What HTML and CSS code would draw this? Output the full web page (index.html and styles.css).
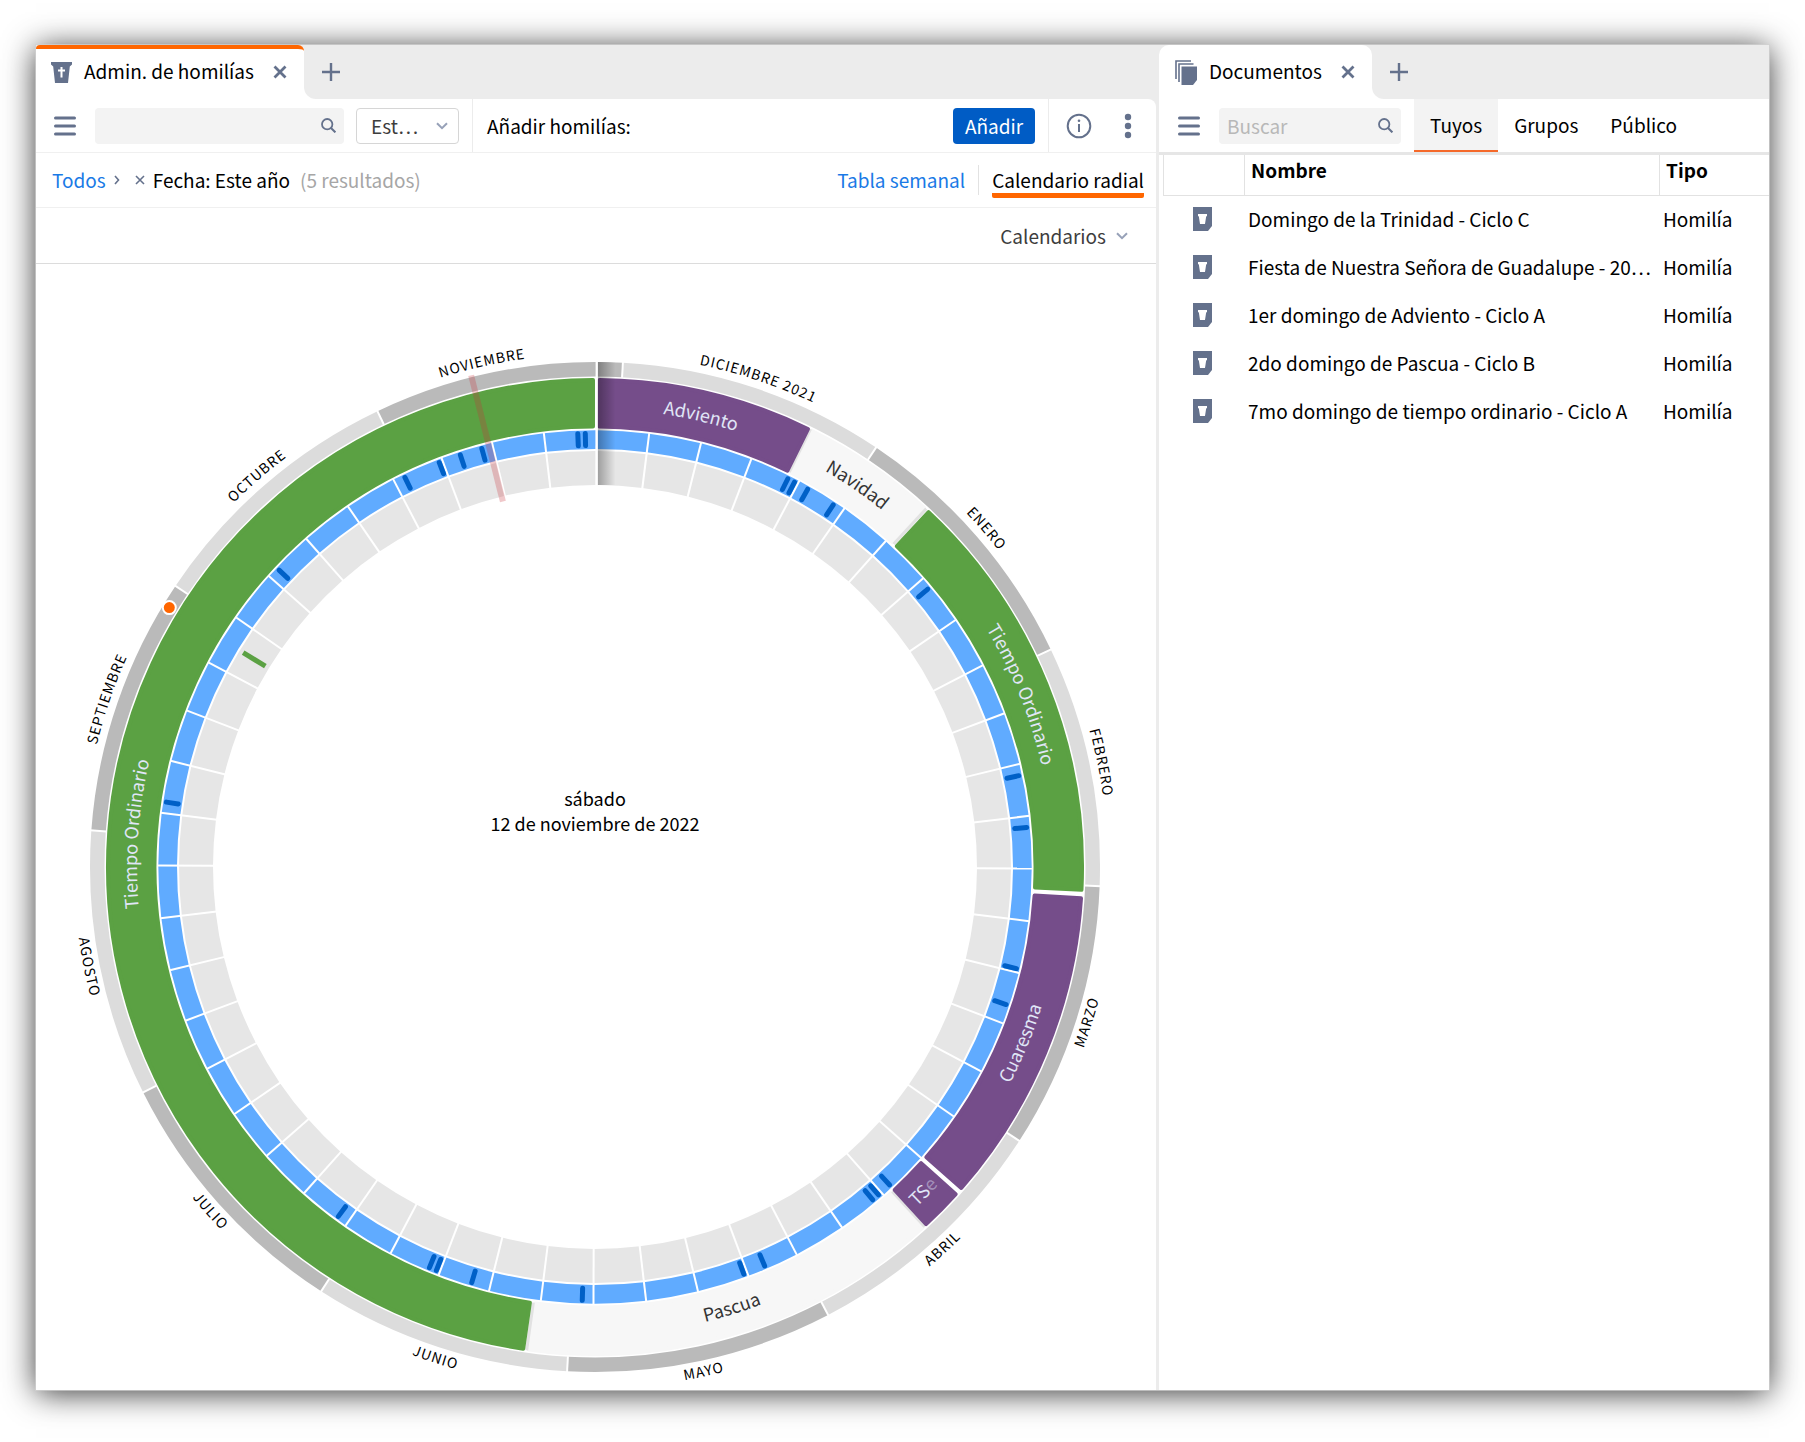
FILE: index.html
```html
<!DOCTYPE html>
<html lang="es">
<head>
<meta charset="utf-8">
<meta name="viewport" content="width=device-width, initial-scale=1">
<title>Admin. de homilías</title>
<link rel="stylesheet" href="styles.css">
</head>
<body>
<svg class="defs" aria-hidden="true">
  <symbol id="i-close" viewBox="0 0 14 14"><path d="M1.500 1.500l11 11M12.500 1.500l-11 11" fill="none" stroke="currentColor" stroke-width="2.800"/></symbol>
  <symbol id="i-plus" viewBox="0 0 18 18"><path d="M9 0v18M0 9h18" fill="none" stroke="currentColor" stroke-width="2.400"/></symbol>
  <symbol id="i-menu" viewBox="0 0 22 20"><path d="M1.500 2h19M1.500 10h19M1.500 18h19" fill="none" stroke="currentColor" stroke-width="3" stroke-linecap="round"/></symbol>
  <symbol id="i-search" viewBox="0 0 15 15"><circle cx="6.200" cy="6.200" r="5.200" fill="none" stroke="currentColor" stroke-width="1.800"/><path d="M10 10l4.400 4.400" stroke="currentColor" stroke-width="2"/></symbol>
  <symbol id="i-chevron" viewBox="0 0 12 8"><path d="M1 1.200l5 5 5-5" fill="none" stroke="currentColor" stroke-width="2"/></symbol>
  <symbol id="i-doc" viewBox="0 0 19 24"><path d="M0 0h19v19l-4 5H0z" fill="currentColor"/><path d="M5 7h9v2.200h-.8L12 17H7L5.800 9.200H5z" fill="#fff"/></symbol>
</svg>
<div class="window">
  <main class="pane pane-main">
    <div class="tabbar">
      <div class="tab tab-active">
        <svg class="ic-ambo" viewBox="0 0 21 21" aria-hidden="true"><path d="M0 0h21v2.500L18.800 4.500 17 21H4L2.200 4.500 0 2.500z" fill="currentColor"/><path d="M10.500 5v10.500M7 8.500h7" stroke="#fff" stroke-width="2"/></svg>
        <span>Admin. de homilías</span>
        <button class="icon-btn tab-close" aria-label="Cerrar pestaña"><svg class="ic-close"><use href="#i-close"/></svg></button>
      </div>
      <div class="tab-rest"><button class="icon-btn" aria-label="Nueva pestaña"><svg class="ic-plus"><use href="#i-plus"/></svg></button></div>
    </div>
    <div class="toolbar">
      <button class="icon-btn menu" aria-label="Menú"><svg class="ic-menu"><use href="#i-menu"/></svg></button>
      <label class="search search-wide"><input type="search" aria-label="Buscar homilías"><svg class="ic-search"><use href="#i-search"/></svg></label>
      <label class="select"><select aria-label="Periodo"><option>Est…</option></select><svg class="ic-chevron"><use href="#i-chevron"/></svg></label>
      <div class="add-zone">
        <span>Añadir homilías:</span>
        <button class="btn-primary">Añadir</button>
      </div>
      <div class="tools">
        <button class="icon-btn" aria-label="Información"><svg class="ic-info" viewBox="0 0 26 26"><circle cx="13" cy="13" r="11.300" fill="none" stroke="currentColor" stroke-width="2"/><path d="M13 11v8" stroke="currentColor" stroke-width="2"/><circle cx="13" cy="7.800" r="1.300" fill="currentColor"/></svg></button>
        <button class="icon-btn" aria-label="Más opciones"><svg class="ic-dots" viewBox="0 0 8 26"><g fill="currentColor"><circle cx="4" cy="4" r="3.200"/><circle cx="4" cy="13" r="3.200"/><circle cx="4" cy="22" r="3.200"/></g></svg></button>
      </div>
    </div>
    <div class="crumbs">
      <a href="#">Todos</a>
      <svg class="ic-next" viewBox="0 0 6 10" aria-hidden="true"><path d="M1 1l3.500 4L1 9" fill="none" stroke="currentColor" stroke-width="1.600"/></svg>
      <button class="icon-btn filter-x" aria-label="Quitar filtro"><svg class="ic-x" viewBox="0 0 10 10"><path d="M1 1l8 8M9 1L1 9" stroke="currentColor" stroke-width="1.600"/></svg></button>
      <span>Fecha: Este año</span>
      <span class="count">(5 resultados)</span>
      <nav class="views">
        <a href="#">Tabla semanal</a>
        <a href="#" class="view-on" aria-current="page">Calendario radial</a>
      </nav>
    </div>
    <div class="options"><button class="drop">Calendarios <svg class="ic-chevron"><use href="#i-chevron"/></svg></button></div>
    <svg class="radial" id="radial" viewBox="0 0 1120 1126" role="img" aria-label="Calendario radial"></svg>
  </main>
  <aside class="pane pane-docs">
    <div class="tabbar">
      <div class="tab">
        <svg class="ic-stack" viewBox="0 0 22 25" aria-hidden="true"><path d="M1 19V1h15" fill="none" stroke="currentColor" stroke-width="1.600"/><path d="M4 22V4h14.500" fill="none" stroke="currentColor" stroke-width="1.600"/><path d="M6.500 6.500H22V20l-4 5H6.500z" fill="currentColor"/></svg>
        <span>Documentos</span>
        <button class="icon-btn tab-close" aria-label="Cerrar pestaña"><svg class="ic-close"><use href="#i-close"/></svg></button>
      </div>
      <div class="tab-rest"><button class="icon-btn" aria-label="Nueva pestaña"><svg class="ic-plus"><use href="#i-plus"/></svg></button></div>
    </div>
    <div class="toolbar toolbar-docs">
      <button class="icon-btn menu" aria-label="Menú"><svg class="ic-menu"><use href="#i-menu"/></svg></button>
      <label class="search"><input type="search" placeholder="Buscar" aria-label="Buscar documentos"><svg class="ic-search"><use href="#i-search"/></svg></label>
      <nav class="scopes">
        <a href="#" class="scope-on" aria-current="page">Tuyos</a>
        <a href="#">Grupos</a>
        <a href="#">Público</a>
      </nav>
    </div>
    <div class="table-wrap">
      <table class="docs">
        <colgroup><col class="c-icon"><col class="c-name"><col></colgroup>
        <thead><tr><th aria-label="Icono"></th><th>Nombre</th><th>Tipo</th></tr></thead>
        <tbody>
          <tr><td><svg class="ic-doc"><use href="#i-doc"/></svg></td><td>Domingo de la Trinidad - Ciclo C</td><td>Homilía</td></tr>
          <tr><td><svg class="ic-doc"><use href="#i-doc"/></svg></td><td>Fiesta de Nuestra Señora de Guadalupe - 20…</td><td>Homilía</td></tr>
          <tr><td><svg class="ic-doc"><use href="#i-doc"/></svg></td><td>1er domingo de Adviento - Ciclo A</td><td>Homilía</td></tr>
          <tr><td><svg class="ic-doc"><use href="#i-doc"/></svg></td><td>2do domingo de Pascua - Ciclo B</td><td>Homilía</td></tr>
          <tr><td><svg class="ic-doc"><use href="#i-doc"/></svg></td><td>7mo domingo de tiempo ordinario - Ciclo A</td><td>Homilía</td></tr>
        </tbody>
      </table>
    </div>
  </aside>
</div>
<script src="chart.js"></script>
</body>
</html>
```
FILE: styles.css
```css
* { box-sizing: border-box; }

body {
  margin: 0;
  padding: 45px 36px 52px;
  background: #fff;
  color: #000;
  font: 19px/24px "Noto Sans CJK SC", "Noto Sans", sans-serif;
}

button, input, select { font: inherit; color: inherit; margin: 0; }
a { color: #1a7ae6; text-decoration: none; }
svg { display: block; flex: none; }

.defs { position: absolute; width: 0; height: 0; }

.window {
  display: grid;
  grid-template-columns: minmax(0, 112fr) minmax(0, 61fr);
  column-gap: 3px;
  background: #ececec;
  box-shadow: 0 0 0 1px rgba(210, 210, 210, .7), 0 3px 30px rgba(0, 0, 0, .8);
}

.pane { background: #fff; min-width: 0; }
.pane-main { background: linear-gradient(#ececec 80px, #fff 80px); }

/* tabs */
.tabbar { display: flex; height: 54px; background: linear-gradient(#ececec 50%, #fff 50%); }
.tab {
  display: flex;
  align-items: center;
  gap: 12px;
  padding: 0 17px 0 16px;
  background: #fff;
  border-radius: 10px 10px 0 0;
}
.tab span { padding-bottom: 2px; }
.tab-active {
  padding-left: 15px;
  border-top: 4px solid #ff6600;
  border-bottom: 4px solid #fff;
  border-radius: 4px 6px 0 0;
}
.tab-close { margin-left: 7px; }
.tab-rest {
  flex: 1;
  display: flex;
  align-items: center;
  padding-left: 18px;
  background: #ececec;
  border-radius: 0 0 0 12px;
}

.icon-btn {
  display: flex;
  align-items: center;
  padding: 0;
  border: 0;
  background: none;
  color: #64718c;
}
.tab > svg { color: #64718c; }
.ic-ambo { width: 21px; height: 21px; }
.ic-stack { width: 22px; height: 25px; }
.ic-close { width: 14px; height: 14px; }
.ic-plus { width: 18px; height: 18px; }
.ic-menu { width: 22px; height: 20px; }
.ic-search { width: 15px; height: 15px; color: #64718c; }
.ic-chevron { width: 12px; height: 8px; color: #97a1b8; }
.ic-info { width: 26px; height: 26px; }
.ic-dots { width: 8px; height: 26px; }
.ic-next { width: 6px; height: 10px; color: #64718c; }
.ic-x { width: 10px; height: 10px; }
.ic-doc { width: 19px; height: 24px; color: #64718c; }

/* toolbars */
.toolbar {
  display: flex;
  align-items: center;
  height: 54px;
  background: #fff;
  border-bottom: 1px solid #f0f0f0;
}
.pane-main .toolbar { border-top-right-radius: 8px; }
.menu { margin: 0 19px 0 18px; }
.search {
  display: flex;
  align-items: center;
  width: 182px;
  height: 36px;
  padding: 0 8px;
  background: #f3f3f3;
  border-radius: 4px;
}
.search-wide { width: 249px; }
.search input {
  flex: 1;
  min-width: 0;
  padding: 0;
  border: 0;
  outline: 0;
  background: none;
}
.search input::placeholder { color: #b8b8b8; opacity: 1; }

.select {
  display: flex;
  align-items: center;
  width: 103px;
  height: 36px;
  margin: 0 13px 0 12px;
  padding: 0 10px 0 14px;
  border: 1px solid #d6d6d6;
  border-radius: 4px;
}
.select select {
  flex: 1;
  min-width: 0;
  padding: 0;
  border: 0;
  outline: 0;
  background: none;
  appearance: none;
  color: #3d3d3d;
}

.add-zone {
  flex: 1;
  display: flex;
  align-items: center;
  justify-content: space-between;
  height: 100%;
  padding: 0 13px 0 14px;
  border: solid #ececec;
  border-width: 0 1px;
}
.btn-primary {
  width: 82px;
  height: 36px;
  padding: 0;
  border: 0;
  border-radius: 4px;
  background: #005cc5;
  color: #fff;
}
.tools { display: flex; align-items: center; gap: 32px; padding: 0 24px 0 17px; }

/* breadcrumbs and views */
.crumbs {
  display: flex;
  align-items: center;
  height: 55px;
  padding: 0 12px 0 16px;
  background: #fff;
  border-bottom: 1px solid #f0f0f0;
}
.ic-next { margin: 0 15px 0 8px; }
.filter-x { margin-right: 8px; }
.count { margin-left: 10px; color: #a6a6a6; }
.views { display: flex; margin-left: auto; }
.views a { height: 36px; padding-top: 6px; }
.views a + a { margin-left: 27px; position: relative; }
.views a + a::before {
  content: "";
  position: absolute;
  left: -14px;
  top: 3px;
  height: 30px;
  border-left: 1px solid #e2e2e2;
}
.views .view-on { color: #000; border-bottom: 5px solid #ff6600; border-radius: 2px; }

.options {
  display: flex;
  justify-content: flex-end;
  align-items: center;
  height: 56px;
  padding-right: 28px;
  background: #fff;
  border-bottom: 1px solid #dcdcdc;
}
.drop {
  display: flex;
  align-items: center;
  gap: 10px;
  padding: 0;
  border: 0;
  background: none;
  color: #3d3d3d;
}

/* documents pane */
.toolbar-docs { height: 56px; border-bottom: 3px solid #e6e6e6; }
.toolbar-docs .menu { margin-left: 19px; }
.scopes { display: flex; align-self: stretch; margin-left: 13px; }
.scopes a { display: flex; align-items: center; padding: 0 16px 2px; color: #000; }
.scopes .scope-on { background: #f3f3f3; box-shadow: inset 0 -2px #f5692a; }

.table-wrap { padding-left: 4px; }
.docs { width: 100%; table-layout: fixed; border-collapse: separate; border-spacing: 0; }
.c-icon { width: 81px; }
.c-name { width: 415px; }
.docs th {
  height: 41px;
  padding: 0 6px 10px;
  text-align: left;
  border-left: 1px solid #e2e2e2;
  border-bottom: 1px solid #e2e2e2;
}
.docs td { height: 48px; padding: 0 4px 3px; white-space: nowrap; }
.docs td:first-child { padding-left: 30px; }

/* radial calendar */
.radial { width: 100%; height: auto; }
.radial text { text-anchor: middle; font-size: 18px; }
.m-dark { fill: #bababa; }
.m-light { fill: #dcdcdc; }
.radial .m-label { font-size: 14px; letter-spacing: 1px; }
.season { stroke-width: 4px; stroke-linejoin: round; }
.s-green { fill: #5ba143; stroke: #5ba143; }
.s-purple { fill: #754d8a; stroke: #754d8a; }
.s-white { fill: #f7f7f7; stroke: #f7f7f7; }
.s-edge { stroke: #e2e2e2; stroke-width: 3px; }
.s-label { fill: #e0e6f7; }
.s-label-dark { fill: #333; }
.s-faded { fill-opacity: .45; }
.w-blue { fill: #60abff; }
.w-grey { fill: #e6e6e6; }
.gap { stroke: #fff; stroke-width: 2px; }
.feast { stroke: #0060c7; stroke-width: 5px; stroke-linecap: round; }
.homily { stroke: #5ba143; stroke-width: 5px; }
.cursor { stroke: rgba(200, 50, 60, .27); stroke-width: 6px; }
.today { fill: #ff6600; stroke: #fff; stroke-width: 2px; }
```
FILE: chart.js
```js
(function () {
  var svg = document.getElementById('radial');
  var NS = 'http://www.w3.org/2000/svg';
  var CX = 559, CY = 603;
  var STEP = 360 / 364, START = 0.2;

  function el(name, attrs, parent) {
    var e = document.createElementNS(NS, name);
    for (var k in attrs) e.setAttribute(k, attrs[k]);
    (parent || svg).appendChild(e);
    return e;
  }
  function pt(r, a) {
    var t = a * Math.PI / 180;
    return (CX + r * Math.sin(t)).toFixed(2) + ' ' + (CY - r * Math.cos(t)).toFixed(2);
  }
  // ring sector; inset keeps the rounded outline inside the sector
  function sector(r0, r1, a0, a1, cls, inset) {
    inset = inset || 0;
    var o0 = a0 + inset / r1 * 57.3, o1 = a1 - inset / r1 * 57.3;
    var i0 = a0 + inset / r0 * 57.3, i1 = a1 - inset / r0 * 57.3;
    r0 += inset; r1 -= inset;
    var big = a1 - a0 > 180 ? 1 : 0;
    el('path', {
      'class': cls,
      d: 'M' + pt(r1, o0) + 'A' + r1 + ' ' + r1 + ' 0 ' + big + ' 1 ' + pt(r1, o1) +
         'L' + pt(r0, i1) + 'A' + r0 + ' ' + r0 + ' 0 ' + big + ' 0 ' + pt(r0, i0) + 'Z'
    });
  }
  function ray(r0, r1, a, cls) {
    var p = pt(r0, a).split(' '), q = pt(r1, a).split(' ');
    el('line', { 'class': cls, x1: p[0], y1: p[1], x2: q[0], y2: q[1] });
  }
  var n = 0;
  // text on an arc, turned so that it always reads left to right
  function label(txt, r, a, cls, drop) {
    var down = a > 90 && a < 270, id = 'arc' + (n++);
    var rr = down ? r + drop : r - drop;
    el('path', {
      id: id, fill: 'none',
      d: down ? 'M' + pt(rr, a + 40) + 'A' + rr + ' ' + rr + ' 0 0 0 ' + pt(rr, a - 40)
              : 'M' + pt(rr, a - 40) + 'A' + rr + ' ' + rr + ' 0 0 1 ' + pt(rr, a + 40)
    });
    var tp = el('textPath', { href: '#' + id, startOffset: '50%' }, el('text', { 'class': cls }));
    txt.forEach(function (part, i) {
      el('tspan', i ? { 'class': 's-faded' } : {}, tp).textContent = part;
    });
  }

  var months = [
    ['', 0, 3], ['DICIEMBRE 2021', 3, 34], ['ENERO', 34, 65], ['FEBRERO', 65, 93],
    ['MARZO', 93, 124], ['ABRIL', 124, 154], ['MAYO', 154, 185], ['JUNIO', 185, 215],
    ['JULIO', 215, 246], ['AGOSTO', 246, 277], ['SEPTIEMBRE', 277, 307],
    ['OCTUBRE', 307, 338], ['NOVIEMBRE', 338, 364]
  ];
  months.forEach(function (m, i) {
    sector(490.5, 505, m[1] * STEP + START, m[2] * STEP + START, i % 2 ? 'm-light' : 'm-dark');
  });
  months.forEach(function (m) {
    ray(490, 506, m[1] * STEP + START, 'gap');
    if (m[0]) label([m[0]], 517, (m[1] + m[2]) / 2 * STEP + START, 'm-label', 4);
  });

  var seasons = [
    [['Navidad'], 26.2, 42.75, 's-white'], [['Pascua'], 137.5, 188.05, 's-white'],
    [['Adviento'], 0.3, 26.16, 's-purple'], [['Tiempo Ordinario'], 43, 92.92, 's-green'],
    [['Cuaresma'], 93.45, 131.46, 's-purple'], [['TS', 'e'], 131.98, 137.4, 's-purple'],
    [['Tiempo Ordinario'], 188.24, 360, 's-green']
  ];
  seasons.forEach(function (s) {
    sector(438.5, 489, s[1], s[2], 'season ' + s[3], 2);
    if (s[3] === 's-white') {
      ray(440, 488, s[2], 's-edge');
      ray(440, 488, s[1], 's-edge');
    }
  });
  seasons.forEach(function (s) {
    label(s[0], 463, (s[1] + s[2]) / 2, s[3] === 's-white' ? 's-label-dark' : 's-label', 5);
  });

  for (var w = 0; w < 52; w++) {
    var a0 = w * 7 * STEP + START, a1 = (w + 1) * 7 * STEP + START;
    sector(418, 436.7, a0, a1, 'w-blue');
    sector(382, 416, a0, a1, 'w-grey');
  }
  for (w = 0; w < 52; w++) ray(381, 437.5, w * 7 * STEP + START, 'gap');

  [27, 28, 30, 34, 51, 79, 86, 105, 110, 139, 141, 142, 159, 162, 184, 199, 204, 205,
   219, 282, 317, 338, 343, 346, 349, 362, 363].forEach(function (d) {
    ray(421.5, 433.5, (d - 0.5) * STEP + START, 'feast');
  });

  ray(386, 412, 304.5 * STEP + START, 'homily');
  ray(377, 507, 349.5 * STEP + START, 'cursor');

  // fold where the year begins
  var g = el('linearGradient', { id: 'fold' }, el('defs', {}));
  el('stop', { offset: '0', 'stop-color': '#000', 'stop-opacity': '.32' }, g);
  el('stop', { offset: '1', 'stop-color': '#000', 'stop-opacity': '0' }, g);
  el('rect', { x: 561.5, y: 98, width: 18, height: 123, fill: 'url(#fold)' });
  el('line', { 'class': 'gap', x1: 560.8, y1: 97, x2: 560.8, y2: 221 });

  var dot = pt(498.5, 304.5 * STEP + START).split(' ');
  el('circle', { 'class': 'today', cx: dot[0], cy: dot[1], r: 6.5 });

  el('text', { x: CX, y: 542 }).textContent = 'sábado';
  el('text', { x: CX, y: 567 }).textContent = '12 de noviembre de 2022';
})();
```
